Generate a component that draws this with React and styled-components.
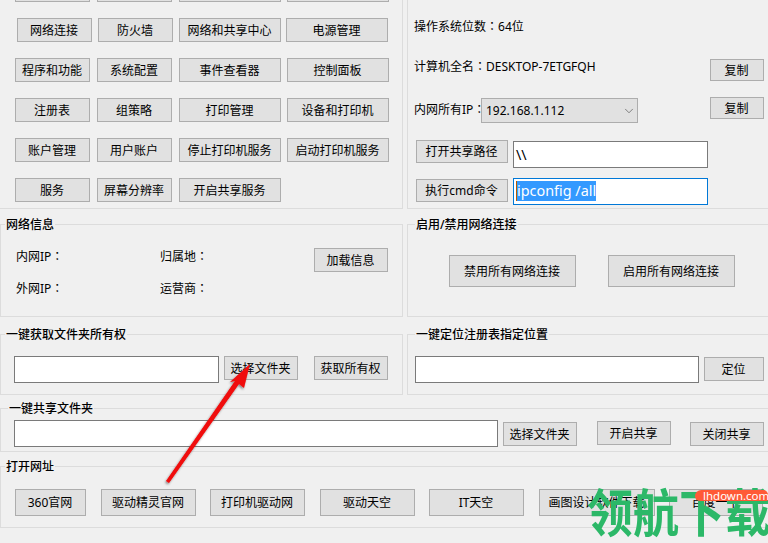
import React from "react";
import styled, { createGlobalStyle } from "styled-components";
import { ChevronDown } from "lucide-react";

const GlobalStyle = createGlobalStyle`
    html, body {
        margin: 0;
        padding: 0;
        background: #f0f0f0;
    }
    * {
        box-sizing: border-box;
    }
`;

const Page = styled.div`
    position: relative;
    width: 768px;
    height: 543px;
    overflow: hidden;
    background: #f0f0f0;
    color: #000;
    font-family: "Noto Sans", "Noto Sans CJK SC", sans-serif;
    font-size: 12px;
    line-height: 20px;
`;

const Columns = styled.div`
    display: grid;
    grid-template-columns: 403px 361px;
    column-gap: 4px;
`;

const TopPanel = styled.div`
    height: 209px;
    border-bottom: 1px solid #dcdcdc;
    ${(p) => (p.$side === "left" ? "border-right: 1px solid #dcdcdc;" : "border-left: 1px solid #dcdcdc;")}
    padding-left: ${(p) => (p.$side === "left" ? "0" : "6px")};
`;

const ToolGrid = styled.div`
    display: flex;
    flex-direction: column;
    row-gap: 16px;
    margin-top: -22px;
`;

const ToolRow = styled.div`
    display: grid;
    grid-template-columns: ${(p) => p.$cols || "82px 82px 108px 102px"};
    padding-left: ${(p) => p.$left || 15}px;
`;

const Button = styled.button`
    display: block;
    width: ${(p) => p.$w || 74}px;
    height: ${(p) => p.$h || 24}px;
    margin: ${(p) => p.$top || 0}px 0 0 0;
    padding: 1px 1px 0 0;
    background: #e1e1e1;
    border: 1px solid #adadad;
    color: #000;
    font: inherit;
    white-space: nowrap;
`;

const InfoLine = styled.div`
    display: flex;
    align-items: flex-start;
    height: ${(p) => p.$h}px;
    margin-top: ${(p) => p.$top}px;
    padding-right: 4px;
`;

const Text = styled.span`
    display: block;
    margin-top: ${(p) => p.$top || 0}px;
    white-space: nowrap;
`;

const IpLabel = styled(Text)`
    width: 67px;
`;

const Colon = styled.span`
    font-family: "Noto Sans CJK TC", sans-serif;
`;

const CopyButton = styled(Button)`
    margin-left: auto;
`;

const Select = styled.div`
    display: flex;
    align-items: center;
    justify-content: space-between;
    width: 157px;
    height: 25px;
    margin-top: 1px;
    padding: 0 1px 0 4px;
    background: #e1e1e1;
    border: 1px solid #adadad;
`;

const Field = styled.div`
    width: ${(p) => p.$w}px;
    height: 27px;
    flex: none;
    margin-left: ${(p) => p.$left || 0}px;
    margin-top: ${(p) => p.$top || 0}px;
    padding: 0 0 0 2px;
    background: #fff;
    border: 1px solid ${(p) => (p.$focus ? "#0078d7" : "#7a7a7a")};
    font-size: 14.4px;
    line-height: 25px;
`;

const Selected = styled.span`
    display: inline-block;
    height: 20px;
    line-height: 20px;
    vertical-align: 1px;
    background: #3399ff;
    color: #fff;
    border-left: 1px solid #b85a00;
`;

const Group = styled.div`
    height: ${(p) => p.$h}px;
    margin-top: ${(p) => p.$top}px;
    border: 1px solid #dcdcdc;
    ${(p) => p.$open && "border-right: none;"}
`;

const Title = styled.div`
    width: fit-content;
    height: 17px;
    margin: -9px 0 0 ${(p) => p.$left || 4}px;
    padding: 0 1px;
    background: #f0f0f0;
    color: #000;
    font-weight: 500;
    line-height: 17px;
`;

const InfoGrid = styled.div`
    display: grid;
    grid-template-columns: 144px 154px 74px;
    grid-template-rows: 32px 32px;
    align-items: center;
    margin: 7px 0 0 15px;
`;

const LoadButton = styled(Button)`
    align-self: end;
`;

const ButtonRow = styled.div`
    display: flex;
    align-items: flex-start;
    column-gap: ${(p) => p.$gap || 0}px;
    margin-top: ${(p) => p.$top}px;
    padding-left: ${(p) => p.$left}px;
`;

const Spaced = styled(Button)`
    margin-left: ${(p) => p.$left || 0}px;
`;

const UrlRow = styled.div`
    display: grid;
    grid-template-columns: 86px 109px 110px 109px 110px 130px 94px;
    margin-top: 14px;
    padding-left: 14px;
`;

const Arrow = styled.svg`
    position: absolute;
    left: 150px;
    top: 355px;
    pointer-events: none;
`;

const Watermark = styled.div`
    position: absolute;
    left: 587px;
    top: 484px;
    color: #2cb868;
    font-family: "Noto Sans CJK SC", sans-serif;
    font-size: 46px;
    font-weight: 700;
    line-height: 58px;
    white-space: nowrap;
    transform: scaleY(1.12);
    transform-origin: 50% 100%;
`;

const Badge = styled.div`
    position: absolute;
    left: 695px;
    top: 490px;
    width: 73px;
    height: 11px;
    padding-left: 8px;
    background: #ff5a36;
    border-radius: 8px 6px 2px 6px;
    color: #fff;
    font-family: "Noto Sans", sans-serif;
    font-size: 11.5px;
    line-height: 11px;
`;

const toolRows = [
    { names: ["", "", "", ""] },
    { names: ["网络连接", "防火墙", "网络和共享中心", "电源管理"], left: 17, cols: "81px 81px 107px 102px" },
    { names: ["程序和功能", "系统配置", "事件查看器", "控制面板"] },
    { names: ["注册表", "组策略", "打印管理", "设备和打印机"] },
    { names: ["账户管理", "用户账户", "停止打印机服务", "启动打印机服务"] },
    { names: ["服务", "屏幕分辨率", "开启共享服务"] },
];

const toolWidths = [75, 75, 102, 102];

const urlButtons = [
    ["360官网", 71],
    ["驱动精灵官网", 95],
    ["打印机驱动网", 95],
    ["驱动天空", 95],
    ["IT天空", 95],
    ["画图设计软件下载", 116],
    ["百度一下", 94],
];

const App = () => {
    return (
        <>
            <GlobalStyle />
            <Page>
                <Columns>
                    <TopPanel $side="left">
                        <ToolGrid>
                            {toolRows.map((row, i) => (
                                <ToolRow key={i} $left={row.left} $cols={row.cols}>
                                    {row.names.map((name, j) => (
                                        <Button key={j} $w={toolWidths[j]}>{name}</Button>
                                    ))}
                                </ToolRow>
                            ))}
                        </ToolGrid>
                    </TopPanel>
                    <TopPanel $side="right">
                        <InfoLine $h={20} $top={16}>
                            <Text>操作系统位数<Colon>：</Colon>64位</Text>
                        </InfoLine>
                        <InfoLine $h={25} $top={20}>
                            <Text>计算机全名<Colon>：</Colon>DESKTOP-7ETGFQH</Text>
                            <CopyButton $w={54} $h={22} $top={3}>复制</CopyButton>
                        </InfoLine>
                        <InfoLine $h={26} $top={16}>
                            <IpLabel $top={2}>内网所有IP<Colon>：</Colon></IpLabel>
                            <Select>
                                192.168.1.112
                                <ChevronDown size={14} strokeWidth={1.2} color="#555" />
                            </Select>
                            <CopyButton $w={54} $h={22}>复制</CopyButton>
                        </InfoLine>
                        <InfoLine $h={28} $top={17}>
                            <Spaced $w={92} $h={23} $left={2}>打开共享路径</Spaced>
                            <Field $w={195} $left={5} $top={1}>\\</Field>
                        </InfoLine>
                        <InfoLine $h={27} $top={10}>
                            <Spaced $w={92} $h={23} $left={2} $top={1}>执行cmd命令</Spaced>
                            <Field $w={195} $left={5} $focus><Selected>ipconfig /all</Selected></Field>
                        </InfoLine>
                    </TopPanel>

                    <Group $h={93} $top={15}>
                        <Title>网络信息</Title>
                        <InfoGrid>
                            <Text>内网IP<Colon>：</Colon></Text>
                            <Text>归属地<Colon>：</Colon></Text>
                            <LoadButton>加载信息</LoadButton>
                            <Text>外网IP<Colon>：</Colon></Text>
                            <Text>运营商<Colon>：</Colon></Text>
                        </InfoGrid>
                    </Group>
                    <Group $h={93} $top={15} $open>
                        <Title $left={7}>启用/禁用网络连接</Title>
                        <ButtonRow $top={22} $left={41} $gap={32}>
                            <Button $w={127} $h={32}>禁用所有网络连接</Button>
                            <Button $w={127} $h={32}>启用所有网络连接</Button>
                        </ButtonRow>
                    </Group>

                    <Group $h={61} $top={17}>
                        <Title>一键获取文件夹所有权</Title>
                        <ButtonRow $top={13} $left={13}>
                            <Field $w={205} />
                            <Spaced $left={5}>选择文件夹</Spaced>
                            <Spaced $left={16}>获取所有权</Spaced>
                        </ButtonRow>
                    </Group>
                    <Group $h={61} $top={17} $open>
                        <Title $left={7}>一键定位注册表指定位置</Title>
                        <ButtonRow $top={13} $left={7}>
                            <Field $w={284} />
                            <Spaced $w={60} $left={5} $top={1}>定位</Spaced>
                        </ButtonRow>
                    </Group>
                </Columns>

                <Group $h={44} $top={13} $open>
                    <Title $left={7}>一键共享文件夹</Title>
                    <ButtonRow $top={3} $left={13}>
                        <Field $w={484} />
                        <Spaced $left={5} $top={2}>选择文件夹</Spaced>
                        <Spaced $left={20} $top={1}>开启共享</Spaced>
                        <Spaced $left={19} $top={2}>关闭共享</Spaced>
                    </ButtonRow>
                </Group>

                <Group $h={62} $top={14} $open>
                    <Title>打开网址</Title>
                    <UrlRow>
                        {urlButtons.map(([name, width]) => (
                            <Button key={name} $w={width} $h={27}>{name}</Button>
                        ))}
                    </UrlRow>
                </Group>

                <Arrow width="110" height="135" viewBox="0 0 110 135">
                    <defs>
                        <filter id="arrowShadow" x="-20%" y="-20%" width="150%" height="150%">
                            <feDropShadow dx="-1" dy="1.5" stdDeviation="1.2" floodColor="#000" floodOpacity="0.45" />
                        </filter>
                    </defs>
                    <polygon
                        points="100,9 94,33 89,29 19,128 16,126 85,26 80,27"
                        fill="#f00808"
                        filter="url(#arrowShadow)"
                    />
                </Arrow>
                <Watermark>领航下载</Watermark>
                <Badge>lhdown.com</Badge>
            </Page>
        </>
    );
};

export default App;
